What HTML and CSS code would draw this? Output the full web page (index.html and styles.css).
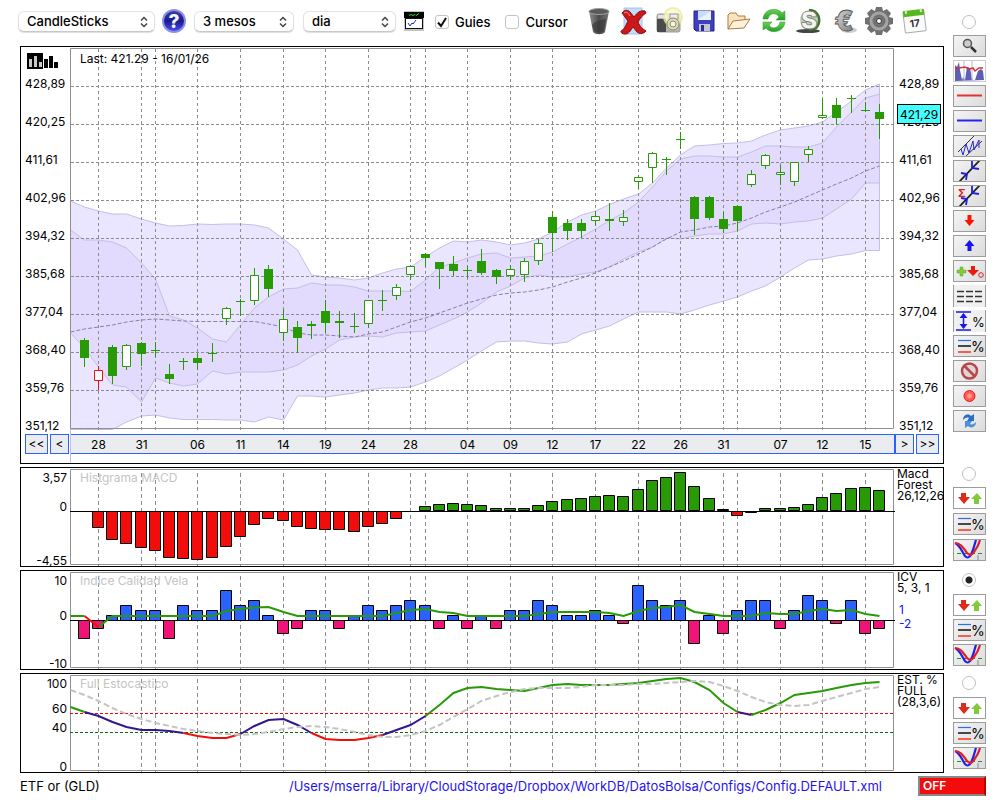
FILE: index.html
```html
<!DOCTYPE html>
<html lang="ca">
<head>
<meta charset="utf-8">
<title>ETF or (GLD)</title>
<link rel="stylesheet" href="styles.css">
</head>
<body>
<svg class="defs" aria-hidden="true">
  <defs>
    <linearGradient id="gBlue" x1="0" y1="0" x2="0" y2="1"><stop offset="0" stop-color="#3a3f9c"/><stop offset=".5" stop-color="#1a1a90"/><stop offset="1" stop-color="#4a4af0"/></linearGradient>
    <linearGradient id="gTrash" x1="0" y1="0" x2="1" y2="0"><stop offset="0" stop-color="#909090"/><stop offset=".5" stop-color="#4a4a4a"/><stop offset="1" stop-color="#777"/></linearGradient>
    <linearGradient id="gGreen" x1="0" y1="0" x2="0" y2="1"><stop offset="0" stop-color="#6cd05c"/><stop offset="1" stop-color="#22a022"/></linearGradient>
    <linearGradient id="gMetal" x1="0" y1="0" x2="1" y2="1"><stop offset="0" stop-color="#e8e8e8"/><stop offset="1" stop-color="#6f6f6f"/></linearGradient>
    <symbol id="i-updown" viewBox="0 0 31 20"><path d="M7 5h5v4h4l-6 7-6-7h3z" fill="#e02a1c"/><path d="M20 16h5v-5h3l-5-6-6 6h3z" fill="#84c83c"/></symbol>
    <symbol id="i-lines" viewBox="0 0 31 20"><path d="M4 4.500h13" stroke="#2f6cf0" stroke-width="1.200"/><path d="M4 10h13" stroke="#111" stroke-width="1.500"/><path d="M4 16h13" stroke="#f4604c" stroke-width="2"/><text x="17" y="16" font-size="14">%</text></symbol>
    <symbol id="i-curves" viewBox="0 0 31 20"><path d="M3 13.500h27" stroke="#2f8a2f" stroke-dasharray="4 3"/><path d="M24 15v5" stroke="#888"/><path d="M1 3c5 2 7 9 10 13 2 2 3 2 5 0 3-4 4-10 6-16" fill="none" stroke="#1f1fe8" stroke-width="2.200"/><path d="M1 3c6 0 9 6 12 10 3 3 5 2 7-1 3-4 5-8 6-12" fill="none" stroke="#e02020" stroke-width="2.200"/></symbol>
    <symbol id="i-trend" viewBox="0 0 31 20"><path d="M5 21L26-1" stroke="#222" stroke-width="1.800"/><path d="M7 12l6 1-1 6M18 0v7l7 1" fill="none" stroke="#2020d8" stroke-width="1.800"/></symbol>
  </defs>
</svg>

<main class="app">
  <div class="top">
    <header class="toolbar">
      <span class="pick pick-l"><select aria-label="Tipus de gràfic"><option>CandleSticks</option></select><svg viewBox="0 0 8 12"><path d="M1 4.500l3-3 3 3M1 7.500l3 3 3-3"/></svg></span>
      <button class="tool help" aria-label="Ajuda"><svg viewBox="0 0 26 26"><circle cx="13" cy="13" r="12" fill="#8b8fe8"/><circle cx="13" cy="13" r="10" fill="url(#gBlue)"/><text x="13" y="20" text-anchor="middle" font-size="19" font-weight="800" fill="#f4f4ff">?</text></svg></button>
      <span class="pick pick-m"><select aria-label="Període"><option>3 mesos</option></select><svg viewBox="0 0 8 12"><path d="M1 4.500l3-3 3 3M1 7.500l3 3 3-3"/></svg></span>
      <span class="pick pick-s"><select aria-label="Interval"><option>dia</option></select><svg viewBox="0 0 8 12"><path d="M1 4.500l3-3 3 3M1 7.500l3 3 3-3"/></svg></span>
      <button class="tool panelicon" aria-label="Finestra"><svg viewBox="0 0 20 20"><rect width="20" height="20" fill="#c4c4c4"/><rect y="1" width="20" height="6" fill="#000"/><path d="M5 4.500l2-1 2 1 2-1 1 1 3-2" stroke="#3bd03b" fill="none"/><rect x="1.500" y="7.500" width="17" height="10" fill="#fff" stroke="#111"/><path d="M4 12l2 3 2-3 1 1 3-4" stroke="#2222e0" fill="none"/></svg></button>
      <label class="check"><input type="checkbox" checked><svg viewBox="0 0 14 14"><path d="M3 7.500l3 3.500 5-8"/></svg>Guies</label>
      <label class="check"><input type="checkbox">Cursor</label>
      <div class="tools">
        <button class="tool" aria-label="Paperera"><svg viewBox="0 0 28 28"><path d="M4 4l4 21c2 3 10 3 12 0l4-21z" fill="url(#gTrash)"/><ellipse cx="14" cy="4.500" rx="10" ry="3" fill="#5a5a5a" stroke="#a0a0a0"/><path d="M7 18c3-5 10-4 14-7l-2 13c-2 2-8 2-10 0z" fill="#333" opacity=".6"/></svg></button>
        <button class="tool" aria-label="Esborra"><svg viewBox="0 0 28 28"><path d="M4 1h18v26H4z" fill="#c4dcfa" stroke="#9fc4f0"/><path d="M2 6c3-4 6-3 8-1l4 5c3-4 6-7 11-6l1 2c-3 2-6 5-8 9 2 5 5 7 8 9-2 3-7 3-9 1l-4-5c-3 4-4 7-8 7-3 0-4-1-4-3 3-1 5-6 7-10-2-3-4-5-6-8z" fill="#cc1818" stroke="#8a0c0c"/><path d="M4 6c3-2 4 0 6 3" stroke="#f09090" fill="none"/></svg></button>
        <button class="tool" aria-label="Captura"><svg viewBox="0 0 28 28"><rect x="2" y="7" width="23" height="18" rx="2" fill="#b4b4b4" stroke="#999"/><rect x="2" y="12" width="9" height="13" fill="#4a4a4a"/><rect x="3" y="8" width="9" height="3" fill="#e4e4e4"/><circle cx="18" cy="10" r="9" fill="#faf9cc" stroke="#eceb9c" stroke-width="2" opacity=".8"/><rect x="15" y="7" width="8" height="5" fill="#eee" stroke="#999"/><circle cx="18" cy="17" r="6" fill="#dcdcac" stroke="#8b8b6a"/><circle cx="18" cy="17" r="3" fill="#f4f4e0" stroke="#888"/></svg></button>
        <button class="tool" aria-label="Desa"><svg viewBox="0 0 28 28"><path d="M4 4h20v20H6l-2-2z" fill="#3f3fc0" stroke="#22228c"/><path d="M8 4h13v9H8z" fill="#c9dcfa"/><path d="M8 13L21 4v9z" fill="#eaf2ff"/><path d="M9 17h11v7H9z" fill="#c4c4d0"/><path d="M11 18h3v6h-3z" fill="#2c2c90"/></svg></button>
        <button class="tool" aria-label="Obre"><svg viewBox="0 0 28 28"><path d="M3 22V8l2-2h6l2 3h7v4" fill="#fbe3c0" stroke="#b07a3c"/><path d="M3 22l5-8 17-2-6 9z" fill="#fdf0dc" stroke="#b07a3c"/></svg></button>
        <button class="tool" aria-label="Refresca"><svg viewBox="0 0 28 28"><path d="M3 12C4 1 18 0 22 6l3-2v9h-9l3-3c-3-5-10-4-11 2z" fill="url(#gGreen)" stroke="#2f9a2f" stroke-width=".5"/><path d="M25 15C24 26 10 27 6 21l-3 2v-8h9l-3 3c3 5 10 3 11-3z" fill="url(#gGreen)" stroke="#2f9a2f" stroke-width=".5"/></svg></button>
        <button class="tool" aria-label="Dòlar"><svg viewBox="0 0 28 28"><ellipse cx="13" cy="24" rx="12" ry="2" fill="#444"/><path d="M14 2c9-1 14 9 10 17-2 4-6 5-10 5z" fill="#3c7430"/><circle cx="14" cy="13" r="9" fill="#c2d0b4"/><text x="14" y="22" text-anchor="middle" font-size="25" font-weight="900" fill="#f2f5ee" stroke="#777" stroke-width=".8">S</text></svg></button>
        <button class="tool" aria-label="Euro"><svg viewBox="0 0 28 28"><ellipse cx="19" cy="23" rx="8" ry="3" fill="#ccc"/><text x="14" y="24" text-anchor="middle" font-size="28" font-weight="900" fill="url(#gMetal)" stroke="#555" stroke-width=".8">€</text></svg></button>
        <button class="tool" aria-label="Configuració"><svg viewBox="0 0 28 28"><g fill="#707070"><circle cx="14" cy="14" r="10.500"/><path d="M11 0h6l1 4v20l-1 4h-6l-1-4V4z"/><path d="M11 0h6l1 4v20l-1 4h-6l-1-4V4z" transform="rotate(45 14 14)"/><path d="M11 0h6l1 4v20l-1 4h-6l-1-4V4z" transform="rotate(90 14 14)"/><path d="M11 0h6l1 4v20l-1 4h-6l-1-4V4z" transform="rotate(135 14 14)"/></g><circle cx="14" cy="14" r="8" fill="none" stroke="#a4a4a4" stroke-width="3"/><circle cx="14" cy="14" r="5" fill="#747474"/><circle cx="14" cy="14" r="2.500" fill="#fff" stroke="#333"/></svg></button>
        <button class="tool" aria-label="Calendari"><svg viewBox="0 0 28 28"><g transform="rotate(-7 14 14)"><rect x="4" y="4" width="21" height="21" rx="1" fill="#fafafa" stroke="#aaa"/><path d="M4 3h21v6H4z" fill="#55b81e"/><path d="M7 2v4M22 2v4" stroke="#d8e8d0" stroke-width="2"/><text x="14.500" y="20" text-anchor="middle" font-size="10" font-weight="700" fill="#333">17</text></g></svg></button>
      </div>
    </header>

    <section class="panel price" aria-label="Preu">
      <div class="axis left">
        <svg class="logo" viewBox="0 0 31 16"><rect width="16" height="16"/><path d="M2 6h3v8H2zM7 3h3v11H7zM12 9h3v5h-3z" fill="#c8c8c8"/><path d="M17 6h4v9h-4zM22 3h4v12h-4zM27 9h4v6h-4z"/></svg>
        <ol class="scale"><li>428,89</li><li>420,25</li><li>411,61</li><li>402,96</li><li>394,32</li><li>385,68</li><li>377,04</li><li>368,40</li><li>359,76</li><li>351,12</li></ol>
      </div>
      <div class="plot">
        <svg id="price" class="chart" viewBox="70 47 825 387" preserveAspectRatio="none"></svg>
        <p class="caption last">Last: 421.29 - 16/01/26</p>
      </div>
      <div class="axis right">
        <ol class="scale"><li>428,89</li><li>420,25</li><li>411,61</li><li>402,96</li><li>394,32</li><li>385,68</li><li>377,04</li><li>368,40</li><li>359,76</li><li>351,12</li></ol>
        <output class="badge">421,29</output>
      </div>
      <div class="nav nav-l"><button class="step">&lt;&lt;</button><button class="step narrow">&lt;</button></div>
      <svg id="dates" class="dates"></svg>
      <div class="nav"><button class="step narrow">&gt;</button><button class="step">&gt;&gt;</button></div>
    </section>
  </div>

  <aside class="side side-price">
    <input type="radio" name="panel" aria-label="Panell preu">
    <button aria-label="Lupa"><svg viewBox="0 0 31 20"><circle cx="13.500" cy="7.500" r="4" fill="#ccc" stroke="#555" stroke-width="1.500"/><path d="M17 11l5 5" stroke="#333" stroke-width="2.500"/></svg></button>
    <button class="plain" aria-label="Volum"><svg viewBox="0 0 31 20"><path d="M1 20V4l2 2 2-5 1 8 2 10 1-3 2 3 2-13 3 1 2 11 1 1 2 0 3-9 3-2 2 2 1 9z" fill="#5c5fb4"/><path d="M18 0v20M10 0v20" stroke="#b8b8e0"/><path d="M1 7h4l6-1 2 1 3 1 3-1 2 3 4-3h4" fill="none" stroke="#e03030" stroke-width="1.500"/></svg></button>
    <button aria-label="Línia vermella"><svg viewBox="0 0 31 20"><path d="M3 9.500h25" stroke="#e43030" stroke-width="2"/></svg></button>
    <button aria-label="Línia blava"><svg viewBox="0 0 31 20"><path d="M3 9.500h25" stroke="#2424f0" stroke-width="2"/></svg></button>
    <button aria-label="Canal"><svg viewBox="0 0 31 20"><path d="M4 16L20 0M12 20L28 5" stroke="#333"/><path d="M7 13l2 6 3-11 3 9 4-12 1 9 5-10v8" fill="none" stroke="#2828d8"/></svg></button>
    <button aria-label="Tendència"><svg viewBox="0 0 31 20"><use href="#i-trend"/></svg></button>
    <button aria-label="Tendència suma"><svg viewBox="0 0 31 20"><use href="#i-trend"/><text x="4" y="11" font-size="11" font-weight="700" fill="#e02020">Σ</text></svg></button>
    <button aria-label="Baixa"><svg viewBox="0 0 31 20"><path d="M13.500 4h4v5h3L15.500 15 10.500 9h3z" fill="#fb1304"/></svg></button>
    <button aria-label="Puja"><svg viewBox="0 0 31 20"><path d="M13.500 15h4v-5h3L15.500 4 10.500 10h3z" fill="#1616f4"/></svg></button>
    <button aria-label="Senyals"><svg viewBox="0 0 31 20"><path d="M6 6h3v3h3v3H9v3H6v-3H3V9h3z" fill="#84c83c" stroke="#5aa820" stroke-width=".5"/><path d="M17 5h4v4h4l-6 6-6-6h4z" fill="#e81c10"/><circle cx="27" cy="14" r="2.300" fill="none" stroke="#e02020"/></svg></button>
    <button class="bare" aria-label="Taula"><svg viewBox="0 0 31 20"><path d="M3 5.500h25M3 10.500h25M3 15.500h25" stroke="#333" stroke-width="1.500" stroke-dasharray="7 2"/></svg></button>
    <button class="bare" aria-label="Rang"><svg viewBox="0 0 31 20"><path d="M2 1h15M2 19h15M9.500 3v14" stroke="#1818e8" stroke-width="1.500"/><path d="M5.500 7l4-5 4 5zM5.500 13l4 5 4-5z" fill="#1818e8"/><text x="18" y="16" font-size="13">%</text></svg></button>
    <button aria-label="Nivells"><svg viewBox="0 0 31 20"><use href="#i-lines"/></svg></button>
    <button aria-label="Prohibit"><svg viewBox="0 0 31 20"><circle cx="15.500" cy="10" r="7.500" fill="#e0d4d8" stroke="#b84848" stroke-width="2.500"/><path d="M10.500 5l10 10" stroke="#b84848" stroke-width="2.500"/></svg></button>
    <button aria-label="Grava"><svg viewBox="0 0 31 20"><circle cx="15.500" cy="10" r="5.500" fill="#ff5a50" stroke="#e42020"/><circle cx="15.500" cy="10" r="2.500" fill="#ff9890"/></svg></button>
    <button aria-label="Sincronitza"><svg viewBox="0 0 31 20"><path d="M9 9c0-5 5-7 8-4l3-2v7h-7l2-3c-2-1-4 0-6 2z" fill="#2f6cc8"/><path d="M22 11c0 5-5 7-8 4l-3 2v-7h7l-2 3c2 1 4 0 6-2z" fill="#4a90dc"/></svg></button>
  </aside>

  <section class="panel small" aria-label="MACD">
    <svg class="ticks"><text x="46" y="14">3,57</text><text x="46" y="43">0</text><text x="46" y="97">-4,55</text></svg>
    <div class="plot"><p class="caption faint">Histgrama MACD</p><svg id="macd" class="chart" viewBox="70 468 825 98" preserveAspectRatio="none"></svg></div>
    <p class="legend">Macd<br>Forest<br>26,12,26</p>
  </section>
  <aside class="side side-tight">
    <input type="radio" name="panel" aria-label="Panell MACD">
    <button class="white" aria-label="Ordre"><svg viewBox="0 0 31 20"><use href="#i-updown"/></svg></button>
    <button aria-label="Nivells"><svg viewBox="0 0 31 20"><use href="#i-lines"/></svg></button>
    <button aria-label="Corbes"><svg viewBox="0 0 31 20"><use href="#i-curves"/></svg></button>
  </aside>

  <section class="panel small" aria-label="ICV">
    <svg class="ticks"><text x="46" y="14">10</text><text x="46" y="49">0</text><text x="46" y="97">-10</text></svg>
    <div class="plot"><p class="caption faint">Indice Calidad Vela</p><svg id="icv" class="chart" viewBox="70 571 825 98" preserveAspectRatio="none"></svg></div>
    <div><p class="legend">ICV<br>5, 3, 1</p><p class="legend values">1<br>-2</p></div>
  </section>
  <aside class="side">
    <input type="radio" name="panel" aria-label="Panell ICV" checked>
    <button class="white" aria-label="Ordre"><svg viewBox="0 0 31 20"><use href="#i-updown"/></svg></button>
    <button aria-label="Nivells"><svg viewBox="0 0 31 20"><use href="#i-lines"/></svg></button>
    <button aria-label="Corbes"><svg viewBox="0 0 31 20"><use href="#i-curves"/></svg></button>
  </aside>

  <section class="panel small" aria-label="Estocàstic">
    <svg class="ticks"><text x="46" y="14">100</text><text x="46" y="39">60</text><text x="46" y="58">40</text><text x="46" y="97">0</text></svg>
    <div class="plot"><p class="caption faint">Full Estocastico</p><svg id="stoch" class="chart" viewBox="70 674 825 98" preserveAspectRatio="none"></svg></div>
    <p class="legend">EST. %<br>FULL<br>(28,3,6)</p>
  </section>
  <aside class="side">
    <input type="radio" name="panel" aria-label="Panell estocàstic">
    <button class="white" aria-label="Ordre"><svg viewBox="0 0 31 20"><use href="#i-updown"/></svg></button>
    <button aria-label="Nivells"><svg viewBox="0 0 31 20"><use href="#i-lines"/></svg></button>
    <button aria-label="Corbes"><svg viewBox="0 0 31 20"><use href="#i-curves"/></svg></button>
  </aside>

  <footer class="status">
    <span>ETF or (GLD)</span>
    <span class="path">/Users/mserra/Library/CloudStorage/Dropbox/WorkDB/DatosBolsa/Configs/Config.DEFAULT.xml</span>
    <button class="off">OFF</button>
  </footer>
</main>
<script src="charts.js"></script>
</body>
</html>
```
FILE: styles.css
```css
* { box-sizing: border-box; }
body { margin: 0; background: #fff; color: #000; font-family: Inter, "Open Sans", sans-serif; font-size: 12px; }
button, select, input { font: inherit; margin: 0; }
button { padding: 0; cursor: pointer; color: inherit; }
p, ol { margin: 0; padding: 0; list-style: none; }
svg { display: block; }
.defs { position: absolute; width: 0; height: 0; }

.app { display: grid; grid-template-columns: minmax(0, 1fr) 33px; column-gap: 9px; row-gap: 3px; padding: 0 14px 0 20px; }
.top { min-width: 0; }

.toolbar { display: flex; align-items: center; height: 46px; padding-bottom: 4px; margin-left: -2px; }
.pick { position: relative; display: block; height: 21px; }
.pick select { appearance: none; width: 100%; height: 21px; padding: 0 8px; border: 1px solid #e2e2e2; border-bottom-color: #c8c8c8; border-radius: 6px; background: #fff; box-shadow: 0 1px 1px #0002; font-size: 13px; font-weight: 500; line-height: 18px; }
.pick svg { position: absolute; right: 7px; top: 5px; width: 8px; height: 12px; fill: none; stroke: #444; stroke-width: 1.5; pointer-events: none; }
.pick-l { width: 137px; }
.pick-m { width: 100px; margin-right: 9px; }
.pick-s { width: 93px; }
.tool { display: block; flex: none; width: 28px; height: 28px; border: 0; background: none; }
.tool svg { width: 100%; height: 100%; overflow: visible; }
.help { width: 26px; height: 26px; margin: 0 7px 0 6px; }
.panelicon { width: 20px; height: 20px; margin: 0 11px 0 8px; }
.check { position: relative; display: flex; align-items: center; gap: 6px; margin-right: 15px; padding-top: 2px; font-size: 13px; font-weight: 500; }
.check input { appearance: none; width: 14px; height: 14px; border: 1px solid #c4c4c4; border-radius: 3px; background: #fff; }
.check svg { position: absolute; left: 0; width: 14px; height: 14px; fill: none; stroke: #111; stroke-width: 2; pointer-events: none; }
.tools { display: flex; gap: 7px; margin-left: auto; padding-right: 16px; }

.panel { display: grid; grid-template-columns: 49px minmax(0, 1fr) 48px; border: 1px solid #000; min-width: 0; overflow: hidden; }
.price { grid-template-rows: 387px 20px; padding-bottom: 9px; }
.small { grid-template-rows: 98px; }
.plot { position: relative; min-width: 0; }
.chart { width: 100%; height: 100%; overflow: visible; }
.chart * { vector-effect: non-scaling-stroke; }
.caption { position: absolute; left: 10px; top: 3px; line-height: 16px; white-space: nowrap; }
.last { top: 4px; }
.faint { top: 2px; color: #c4c4c4; }

.axis { display: flex; flex-direction: column; position: relative; padding-left: 4px; }
.left { padding-top: 6px; }
.right { padding-top: 29px; }
.logo { width: 31px; height: 16px; margin: 0 0 7px 2px; }
.scale { display: flex; flex-direction: column; justify-content: space-between; flex: 1; line-height: 16px; }
.badge { position: absolute; left: 2px; top: 57px; width: 44px; height: 20px; padding-left: 2px; border: 1px solid #000; background: #4ff; line-height: 19px; }
.nav { display: flex; gap: 2px; }
.nav-l { padding-left: 4px; }
.step { width: 23px; border: 1px solid #2962ff; background: #ebecf0; line-height: 18px; }
.narrow { width: 19px; }
.dates { width: 100%; height: 20px; background: #ebecf0; border: 1px solid #2962ff; }
.dates text { text-anchor: middle; }

.ticks { width: 49px; height: 98px; overflow: visible; }
.ticks text { text-anchor: end; }
.legend { padding-left: 2px; line-height: 11px; white-space: nowrap; }
.values { padding: 10px 0 0 4px; line-height: 14px; color: #1414ff; }

.side { display: flex; flex-direction: column; gap: 3px; padding-top: 3px; }
.side-price { padding-top: 15px; }
.side-tight { gap: 4px; padding-top: 0; }
.side input { appearance: none; width: 14px; height: 14px; margin: 0 9px 4px; border: 1px solid #c0c0c0; border-radius: 50%; background: #fff; flex: none; }
.side-price input { margin-bottom: 3px; }
.side-tight input { margin-bottom: 2px; }
.side input:checked { background: radial-gradient(#222 0 3px, #fff 4px); }
.side button { height: 22px; border: 1px solid #9c9c9c; background: linear-gradient(135deg, #f4f4f4, #dcdcdc); overflow: hidden; }
.side button svg { width: 100%; height: 20px; }
.side .plain { background: #fff; border-color: #ccc; }
.side .white { background: #fff; }
.side .bare { border-width: 0 1px; background: #f0f0f0; }

.status { grid-column: 1 / -1; display: flex; align-items: center; height: 20px; font-size: 13px; }
.path { margin-left: auto; padding-right: 36px; color: #1f14f0; white-space: nowrap; }
.off { width: 68px; height: 20px; padding-left: 3px; border: 2px solid; border-color: #888 #b00 #888 #888; background: #f40c0c; color: #fff; font-size: 12px; font-weight: 600; text-align: left; line-height: 16px; }
```
FILE: charts.js
```js
const NS = "http://www.w3.org/2000/svg";
const X = i => Math.floor(70.1 + 14.2 * i) + 0.5;
const GRID = [2, 5, 6, 9, 12, 15, 18, 21, 24, 25, 28, 31, 34, 37, 40, 43, 46, 47, 50, 53, 56];
const GREEN = "#289a06", PURPLE = "#33188c", RED = "#f20d0d", GREY = "#8c8c8c";

function add(svg, tag, attrs) {
  const el = document.createElementNS(NS, tag);
  for (const k in attrs) el.setAttribute(k, attrs[k]);
  svg.appendChild(el);
  return el;
}
const line = (s, x1, y1, x2, y2, stroke, extra) => add(s, "path", { d: `M${x1} ${y1}L${x2} ${y2}`, stroke, fill: "none", ...extra });
const points = (ys, from = 0) => ys.map((y, k) => `${X(k + from)},${y}`);
const curve = (s, ys, stroke, extra, from = 0) => add(s, "polyline", { points: points(ys, from).join(" "), fill: "none", stroke, ...extra });

function band(s, up, low, fill) {
  add(s, "polygon", { points: points(up).concat(points(low).reverse()).join(" "), fill, stroke: "#c4bee4" });
}
function verticals(s, top, bottom, dash) {
  GRID.forEach(i => line(s, X(i), top, X(i), bottom, GREY, { "stroke-dasharray": dash }));
}
function frame(s, top, bottom) {
  add(s, "rect", { x: 70.5, y: top, width: 823, height: bottom - top, fill: "none", stroke: "#909090" });
}

/* Price */
const outerUp = [201,207,211,214,214,219,223,226,225.5,224,224.5,224,224,225,228,239,250,275,277,278,280,278,273,269,267,257,248,241,242,240,242,245,243,239,232,222,215,211,204.5,199,194,183,168,155,146,145,143.5,143,141,135,130,128,126,122,112,101,90,84];
const outerLow = [429.5,429.5,429.5,429.5,422,416,415,418,419.5,419.5,419.5,420,420,422,417,420,396,396,397,395,393,390,388,388,387,382,376,368,360,351,342,341,341,343,344,342,334,330,326,319,312,312,312,314,310,305,301,297,291,286,277,268,260,259,256,254,250.5,250.5];
const innerUp = [230,240,240,242,248,263,279,316,320,328,339,342,325,308,297,289,288,283,285,285,287,291,291,291,291.5,280,267,263,258,254,253,258,257,256,252,244,237,229,220.5,213,202,187,171,159,156,156,157,157,152,146,146,147,147,143,127,112,98,94];
const innerLow = [333,348,367,385,387,402,378,383,386,384,371,374,372,372,372,370,365,356,349,340,337,336,337,333,332,331,325,319,312,303,292,286,278,275,277,277,274,272,267,259,252,247,238,239,236,234,234,231,224,223,224,222,221,218,209,199,183,183];
const mid = [332,329,327,325,322,320,319,320,321,321.5,321.5,321.5,321.5,321.5,324,327,333,335,335,336,337,334,332,327,322,318,313,308,303,299,295,293,292,290,287,282,278,273,267,261,254,247,239,232,230,227,226,223,218,212,207,202,196,190,184,178,171,166];
/* high, low, body top, body bottom, kind (g solid, w hollow, r red hollow, d flat) */
const candles = [
  [338,367,340,358,"g"],[366,390,370,380,"r"],[345,384,347,376,"g"],[344,370,345,366,"w"],[342,366,343,354,"g"],[342,357,350,350,"d"],
  [364,384,374,379,"g"],[358,370,361,361,"d"],[353,370,358,363,"g"],[343,362,353,353,"d"],[307,325,308,318,"w"],[299,316,301,301,"d"],
  [268,305,275,300,"w"],[265,297,269,289,"g"],[309,341,319,332,"w"],[321,353,327,338,"g"],[321,339,324,326,"g"],[300,333,311,323,"g"],
  [311,338,321,323,"g"],[313,333,326,326,"d"],[300,328,300,323,"w"],[290,311,300,300,"d"],[284,300,287,295,"w"],[265,280,266,274,"w"],
  [253,267,254,258,"g"],[262,289,262,269,"g"],[256,276,264,271,"g"],[266,278,270,270,"d"],[249,275,261,273,"g"],[269,284,270,277,"g"],
  [265,280,269,275,"w"],[258,282,261,274,"w"],[239,265,243,260,"w"],[211,252,217,233,"g"],[219,240,223,231,"g"],[219,238,223,231,"g"],
  [211,226,216,220,"w"],[203,231,219,221,"g"],[210,226,217,221,"w"],[175,189,177,181,"w"],[152,183,153,167,"w"],[157,175,159,159,"d"],
  [132,149,139,139,"d"],[196,235,197,219,"g"],[196,220,197,218,"g"],[212,233,219,229,"g"],[205,231,206,221,"g"],[170,187,174,184,"w"],
  [154,169,155,165,"w"],[165,185,172,174,"w"],[162,186,162,181,"w"],[146,162,149,154,"w"],[99,119,115,117,"w"],[98,125,105,118,"g"],
  [95,113,98,98,"d"],[102,112,110,110,"d"],[104,139,112,119,"g"]
];
const p = document.getElementById("price");
band(p, outerUp, outerLow, "#ebe6ff");
band(p, innerUp, innerLow, "#e3dbfd");
for (let k = 0; k < 9; k++) line(p, 71, 86.5 + 38 * k, 894, 86.5 + 38 * k, GREY, { "stroke-dasharray": "3 2" });
verticals(p, 49, 430, "3 3");
curve(p, mid, "#8a7fa8", { "stroke-dasharray": "4 2" });
frame(p, 48.5, 428.5);
line(p, 70.5, 429, 70.5, 463, "#c4bee4");
candles.forEach(([hi, lo, top, bot, kind], k) => {
  const x = X(k + 1), color = kind === "r" ? "#f01010" : GREEN;
  line(p, x, hi, x, lo, color);
  if (kind === "d") line(p, x - 4.5, top + 0.5, x + 4.5, top + 0.5, color);
  else if (kind === "g") add(p, "rect", { x: x - 4.5, y: top, width: 9, height: bot - top, fill: color });
  else add(p, "rect", { x: x - 4, y: top + 0.5, width: 8, height: bot - top, fill: "#fff", stroke: color });
});

/* Date axis */
const dates = document.getElementById("dates");
[[2,"28"],[5,"31"],[9,"06"],[12,"11"],[15,"14"],[18,"19"],[21,"24"],[24,"28"],[28,"04"],[31,"09"],[34,"12"],[37,"17"],[40,"22"],[43,"26"],[46,"31"],[50,"07"],[53,"12"],[56,"15"]]
  .forEach(([i, t]) => { add(dates, "text", { x: ((X(i) - 71) / 823 * 100).toFixed(2) + "%", y: 14 }).textContent = t; });

function bar(s, i, zero, y, fill) {
  add(s, "rect", { x: X(i) - 6, y: Math.min(zero, y), width: 11, height: Math.abs(y - zero), fill, stroke: "#000" });
}

/* MACD histogram: bar end per session, from the second one */
const macd = [527,539,543,547,550,557,558,559,557,546,536,524,518,520,526,528,529,529,531,526,523,518,null,506,504,503,504,505,508,508,508,505,501,499,498,496,495,496,489,480,477,472,486,498,509,515,512,508,508,507,504,497,493,488,487,490];
const m = document.getElementById("macd");
frame(m, 469.5, 564.5);
verticals(m, 473, 566, "4 3");
macd.forEach((y, k) => { if (y !== null) bar(m, k + 2, y > 511 ? 511.5 : 510.5, y + 0.5, y > 511 ? RED : GREEN); });
line(m, 70, 511.5, 895, 511.5, "#000");

/* ICV */
const icv = [-4,-2,1,3,2,2,-4,3,2,2,6,3,4,1,-3,-2,2,2,-2,1,3,2,3,4,3,-2,1,-2,1,-2,2,2,4,3,1,1,2,1,-1,7,4,3,4,-5,1,-3,2,4,4,-2,2,5,4,-1,4,-3,-2];
const icvLine = [616,616,627,616,616,616,616,616,616,616,616,611,609,607.5,607,612,616,616,616,616,616,616,616,613,610,609,612,613,616,616,616,616,616,614,612,612,612,612,613,616,611,608,607,605,612,614,616,616,616,613,614,614,611,609,611,610,614,616];
const c = document.getElementById("icv");
frame(c, 572.5, 667.5);
verticals(c, 576, 669, "4 3");
icv.forEach((v, k) => bar(c, k + 1, 620.5, v > 0 ? 620.5 - 5 * v : 618.5 + 5 * -v, v > 0 ? "#2962ff" : "#f01478"));
line(c, 70, 620.5, 895, 620.5, "#000");
curve(c, icvLine.slice(2), GREEN, { "stroke-width": 2 }, 2);
curve(c, icvLine.slice(0, 2), GREEN, { "stroke-width": 2 });
curve(c, icvLine.slice(1, 3), RED, { "stroke-width": 2 }, 1);

/* Stochastic */
const k = [707,712,716,722,727,730,730,731,733,736,738,738,734,726,720,719,725,733,739,740,740,738,735,730,725,716,705,693,688,687,689,690,691,688,685,684,685,685,685,684,683,681,679,678,682,690,703,712,715,710,703,695,693,691,688,685,683,682];
const d = [690,695,701,708,714,719,723,726,729,731,733,734,735,734,732,729,727,726,727,729,732,735,737,737,735,731,725,717,709,701,696,692,689,688,688,688,687,685,685,685,684,684,683,682,681,682,686,691,697,702,705,706,705,701,697,693,689,687];
const s = document.getElementById("stoch");
frame(s, 675.5, 770.5);
verticals(s, 679, 772, "4 3");
line(s, 70, 713.5, 895, 713.5, "#f00000", { "stroke-dasharray": "3 2" });
line(s, 70, 732.5, 895, 732.5, "#0a6a0a", { "stroke-dasharray": "3 2" });
[[0,1,GREEN],[1,8,PURPLE],[8,12,RED],[12,17,PURPLE],[17,22,RED],[22,25,PURPLE],[25,47,GREEN],[47,48,PURPLE],[48,57,GREEN]]
  .forEach(([a, b, color]) => curve(s, k.slice(a, b + 1), color, { "stroke-width": 2 }, a));
curve(s, d, "#c4c4c4", { "stroke-width": 2, "stroke-dasharray": "6 3" });
```
